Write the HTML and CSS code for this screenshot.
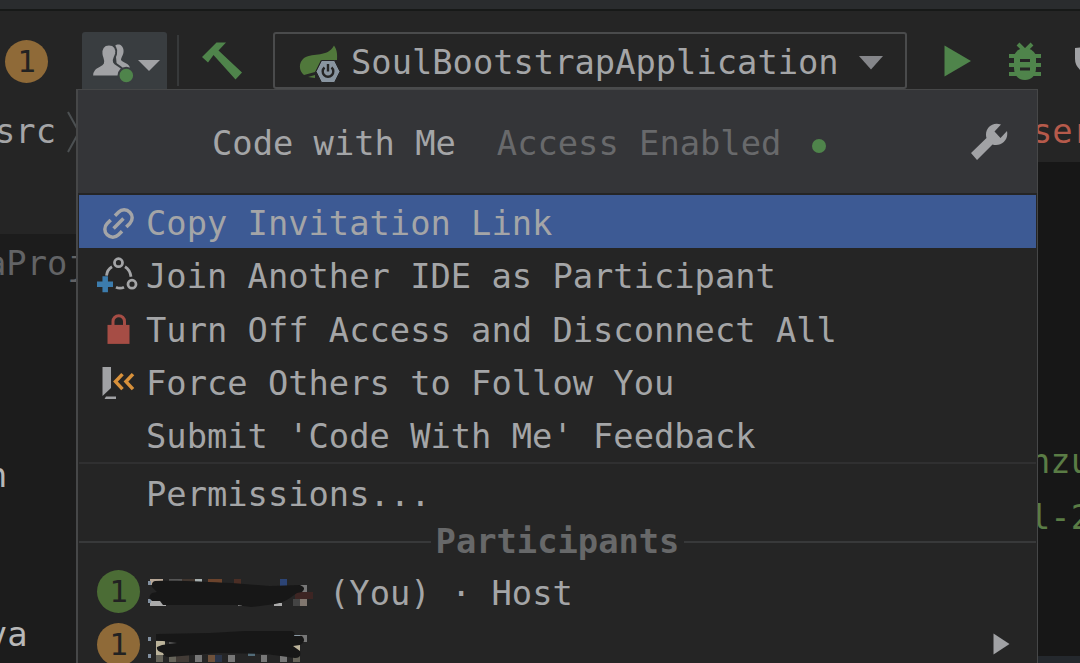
FILE: index.html
```
<!DOCTYPE html>
<html lang="en">
<head>
  <meta charset="UTF-8">
  <meta name="viewport" content="width=device-width, initial-scale=1.0">
  <title>Code with Me</title>
  <link rel="stylesheet" href="styles.css">
</head>
<body>
  <div class="titlebar"></div>

  <!-- Toolbar -->
  <div class="toolbar">
    <span class="avatar orange">1</span>
    <div class="cwm-button">
      <svg width="85" height="57" viewBox="82 32 85 57">
        <path class="gray" d="M115 46C118 43 123 45 123.500 50C124 55 121 57 121 60C123 63 129 63 130 68H117Z"/>
        <path class="gray edge" d="M109 44.500C115 44.500 117 49 116 54C115 58 113 59 114 62C116 66 124 65 125 76.500H92C92 66 101 67 103 63C104 60 102 58 101.500 54C101 49 103 44.500 109 44.500Z"/>
        <circle class="green edge" cx="126.300" cy="75.500" r="7.800"/>
        <path class="gray" d="M138 60H160L149 71Z"/>
      </svg>
    </div>
    <div class="divider"></div>
    <svg class="hammer" width="42" height="40" viewBox="202 41 42 40">
      <path class="green" d="M202 57L216.500 42.500H226L218.500 50.500L242 72.500L235.500 79.500L213.500 55L208 62.500Z"/>
    </svg>
    <div class="run-config">
      <svg width="42" height="40" viewBox="299 44 42 40">
        <path class="leaf" d="M334 45.500C338 51 337 57 337 60H321L315 72L304 75C299 71 298 63 304 58C314 52 327 58 334 45.500ZM308 77L315 75V78Z"/>
        <path class="badge" d="M321.500 60.500H334.500L340 71.500L334.500 82.500H321.500L316 71.500Z"/>
        <path class="power" d="M324.500 67.500A5.300 5.300 0 1 0 331.500 67.500M328 64V71.500"/>
      </svg>
      <span class="config-name">SoulBootstrapApplication</span>
      <svg class="config-arrow" width="24" height="14" viewBox="0 0 24 14"><path d="M0 0H24L12 13.500Z"/></svg>
    </div>
    <svg class="run" width="28" height="32" viewBox="0 0 28 32"><path class="green" d="M0.500 0.500L27 16L0.500 31.500Z"/></svg>
    <svg class="bug" width="34" height="38" viewBox="1008 42 34 38">
      <path class="bug-legs" d="M1018 44L1025 51L1032 44M1009 56H1041M1009 65H1041M1009 74H1041"/>
      <path class="green" d="M1014 55Q1018 48 1025 48T1036 55V68C1036 76 1031 80 1025 80S1014 76 1014 68Z"/>
      <path class="bug-slits" d="M1020 60.500H1030M1020 69H1030"/>
    </svg>
    <svg class="shield" width="8" height="26" viewBox="0 0 8 26"><path class="gray" d="M0 1L8 0V25Q0 20 0 12Z"/></svg>
  </div>

  <!-- Breadcrumbs -->
  <div class="navbar">
    <span class="crumb">src</span>
    <svg class="chevron" width="14" height="42" viewBox="0 0 14 42"><path d="M1 1L12 21L1 41"/></svg>
    <span class="crumb error">ser</span>
  </div>

  <div class="workspace">
    <div class="project">
      <div class="project-header"></div>
      <div class="project-root">aProj</div>
      <div class="project-file">n</div>
      <div class="project-file last">va</div>
    </div>
    <div class="editor">
      <div class="code">nzu</div>
      <div class="code">l-2</div>
      <div class="editor-footer"></div>
    </div>
  </div>

  <!-- Code with Me popup -->
  <div class="popup">
    <div class="popup-header">
      <span class="popup-title">Code with Me</span>
      <span class="popup-status">Access Enabled</span>
      <span class="status-dot"></span>
      <svg class="wrench" width="38" height="38" viewBox="970 123 38 38">
        <path class="gray" d="M971 153L986.500 138C984 130 991 121 1001 124.500L994.500 131.500L1000.500 138L1007 131C1009 141 1000 147 992.500 144.500L977 160Z"/>
      </svg>
    </div>
    <div class="item selected">
      <svg class="icon" width="68" height="53" viewBox="79 195 68 53">
        <g class="link" transform="translate(118.500 223.500) rotate(-45)">
          <path d="M-3 -8H-8A8 8 0 0 0 -8 8H-3M3 -8H8A8 8 0 0 1 8 8H3M-7 0H7"/>
        </g>
      </svg>
      <span>Copy Invitation Link</span>
    </div>
    <div class="item">
      <svg class="icon" width="68" height="53" viewBox="79 248.300 68 53">
        <g class="join">
          <circle cx="118.500" cy="263" r="4"/>
          <circle cx="132" cy="284.500" r="4"/>
          <path d="M112 267Q107 270 106.500 276M125 267Q130 270 131 277M116 287.500Q120 289.500 124 287.500"/>
        </g>
        <path class="plus" d="M105.200 276.500V292.500M97 284.500H113"/>
      </svg>
      <span>Join Another IDE as Participant</span>
    </div>
    <div class="item">
      <svg class="icon" width="68" height="53" viewBox="79 301.600 68 53">
        <path class="lock" d="M107.500 324.500H129.500V343.500H107.500Z"/>
        <path class="shackle" d="M113 325V321A5.700 5.700 0 0 1 124.500 321V325"/>
      </svg>
      <span>Turn Off Access and Disconnect All</span>
    </div>
    <div class="item">
      <svg class="icon" width="68" height="53" viewBox="79 354.900 68 53">
        <path class="gray" d="M102.500 367H111V388L102.500 396ZM106 396.300H116V399H104.500Z"/>
        <path class="follow" d="M122.500 374L115.500 381.500L122.500 389M133 374L126 381.500L133 389"/>
      </svg>
      <span>Force Others to Follow You</span>
    </div>
    <div class="item no-icon">Submit 'Code With Me' Feedback</div>
    <div class="separator"></div>
    <div class="item no-icon">Permissions...</div>
    <div class="section"><span>Participants</span></div>
    <div class="item participant">
      <span class="avatar green-bg">1</span>
      <svg class="redacted" width="166" height="40" viewBox="147 573 166 40">
        <g class="mosaic">
          <path fill="#b8a898" d="M150 580h13v6h-13z"/><path fill="#555" d="M169 580h13v6h-13z"/><path fill="#40352e" d="M182 580h13v6h-13z"/>
          <path fill="#a7b0b0" d="M195 580h7v6h-7z"/><path fill="#6b432c" d="M208 580h14v6h-14z"/><path fill="#4b2e25" d="M234 580h7v6h-7z"/>
          <path fill="#2c4475" d="M280 580h7v8h-7z"/><path fill="#777" d="M300 586h7v7h-7z"/><path fill="#3d2523" d="M295 593h18v7h-18z"/>
          <path fill="#444" d="M293 600h7v7h-7z"/><path fill="#81776f" d="M300 600h7v7h-7z"/><path fill="#aaa" d="M150 601h16v6h-16zM238 604h4v3h-4zM274 604h8v3h-8z"/>
          <path fill="#8290a0" d="M148 582h3v4h-3zM148 600h3v4h-3z"/>
        </g>
        <path class="ink" d="M155 582C182 581 204 583 232 584L270 587L300 586Q307 589 302 593L297 594C290 599 285 603 275 605L251 608L236 606H163L160 602L152 602Q147 598 152 594L157 593L152 588Q151 583 155 582Z"/>
      </svg>
      <span>(You) · Host</span>
    </div>
    <div class="item participant">
      <span class="avatar orange">1</span>
      <svg class="redacted" width="166" height="40" viewBox="147 625 166 40">
        <g class="mosaic">
          <path fill="#8290a0" d="M148 636h3v4h-3zM148 653h3v4h-3z"/><path fill="#555" d="M169 640h9v3h-9z"/><path fill="#8998a3" d="M293 634h7v6h-7z"/>
          <path fill="#777" d="M300 634h7v7h-7zM195 654h7v7h-7zM228 654h7v7h-7zM261 654h6v7h-6zM280 654h7v7h-7z"/><path fill="#bcb49b" d="M156 640h9v14h-9zM293 642h7v8h-7z"/>
          <path fill="#66645a" d="M156 654h7v7h-7zM169 654h7v7h-7zM293 654h7v7h-7z"/><path fill="#423b36" d="M176 654h13v7h-13z"/><path fill="#6e513b" d="M208 654h7v7h-7z"/>
          <path fill="#2b3549" d="M215 654h7v7h-7z"/><path fill="#526b78" d="M248 650h7v5h-7z"/>
        </g>
        <path class="ink" d="M156 633L210 632L245 630H292Q296 631 294 635H302Q307 640 300 644L293 645L300 650Q302 657 295 657L266 653L218 652L169 656Q164 656 163 652Q156 650 157 646L162 644L177 642L156 639Z"/>
      </svg>
      <svg class="submenu" width="17" height="22" viewBox="0 0 17 22"><path class="gray" d="M0.500 0.500L16.500 11L0.500 21.500Z"/></svg>
    </div>
  </div>
</body>
</html>
```
FILE: styles.css
```
* {
  box-sizing: border-box;
}
body {
  margin: 0;
  width: 1080px;
  height: 663px;
  overflow: hidden;
  position: relative;
  display: flex;
  flex-direction: column;
  background: #252525;
  color: #a4a5a7;
  font-family: 'DejaVu Sans Mono', monospace;
  font-size: 33.75px;
  line-height: 40px;
  white-space: nowrap;
}
svg {
  display: block;
  flex: none;
}
.gray {
  fill: #a1a2a5;
}
.green {
  fill: #4f844b;
}
.titlebar {
  flex: none;
  height: 11px;
  background: #2a2c2e;
  border-bottom: 2px solid #171918;
}

/* Toolbar */
.toolbar {
  flex: none;
  height: 78px;
  display: flex;
  align-items: flex-start;
  padding: 21px 0 0 5px;
}
.toolbar > * {
  flex: none;
}
.avatar {
  flex: none;
  width: 43px;
  height: 43px;
  border-radius: 50%;
  color: #222;
  font-size: 31px;
  line-height: 43px;
  text-align: center;
}
.orange {
  background: #8f6a38;
}
.green-bg {
  background: #4b6c35;
}
.toolbar .avatar {
  margin-top: 8px;
}
.cwm-button {
  margin-left: 34px;
  width: 85px;
  height: 57px;
  border-radius: 3px 3px 0 0;
  background: #393d40;
}
.edge {
  stroke: #393d40;
  stroke-width: 2;
}
.divider {
  width: 2px;
  height: 51px;
  margin: 3px 0 0 10px;
  background: #37393a;
}
.hammer {
  margin: 9px 0 0 23px;
}
.run-config {
  display: flex;
  align-items: flex-start;
  width: 634px;
  height: 57px;
  margin-left: 29px;
  padding: 10px 0 0 24px;
  border: 2px solid #4a4b4c;
  border-radius: 3px;
}
.leaf {
  fill: #50783b;
}
.badge {
  fill: #8995a0;
  stroke: #252525;
  stroke-width: 1;
}
.power {
  fill: none;
  stroke: #252525;
  stroke-width: 2.4;
}
.config-name {
  margin: -1px 0 0 10px;
}
.config-arrow {
  margin: 12px 0 0 20px;
  fill: #85868a;
}
.run {
  margin: 13px 0 0 37px;
}
.bug {
  margin: 10px 0 0 36px;
}
.bug-legs {
  fill: none;
  stroke: #4f844b;
  stroke-width: 4;
}
.bug-slits {
  stroke: #252525;
  stroke-width: 3;
}
.shield {
  margin: 15px 0 0 33px;
}

/* Breadcrumbs */
.navbar {
  flex: none;
  height: 73px;
  display: flex;
  padding-top: 22px;
}
.crumb {
  flex: none;
  width: 61px;
  margin: 1px 0 0 -5px;
}
.chevron {
  margin-left: 11px;
}
.chevron path {
  fill: none;
  stroke: #4c5052;
  stroke-width: 2;
}
.error {
  margin-left: 951px;
  color: #b65a4b;
}

.workspace {
  flex: 1;
  min-height: 0;
  display: flex;
  justify-content: space-between;
}
.project {
  width: 100px;
  background: #1c1c1c;
}
.project-header {
  height: 72px;
  background: #252525;
}
.project-root {
  margin: 10px 0 0 -14px;
  color: #626365;
}
.project-file {
  margin: 172px 0 0 -13px;
  color: #b8b8b8;
}
.project-file.last {
  margin-top: 119px;
}
.editor {
  width: 50px;
  padding-top: 280px;
  background: #171717;
  color: #5a7c45;
}
.code {
  height: 56px;
}
.editor-footer {
  height: 8px;
  margin-top: 102px;
  background: #24282d;
}

/* Popup menu */
.popup {
  position: absolute;
  left: 76px;
  top: 89px;
  width: 962px;
  height: 590px;
  padding: 0 1px;
  border: solid #464748;
  border-width: 1px 1px 0 2px;
  background: #252525;
}
.popup-header {
  display: flex;
  align-items: flex-start;
  height: 103px;
  margin: 0 -1px 2px;
  padding: 34px 0 0 134px;
  background: #343538;
}
.popup-status {
  margin-left: 41px;
  color: #68696b;
}
.status-dot {
  width: 14px;
  height: 14px;
  margin: 15px 0 0 31px;
  border-radius: 50%;
  background: #4f844b;
}
.wrench {
  margin: -1px 0 0 144px;
}
.item {
  display: flex;
  align-items: center;
  height: 53.3px;
}
.item > span:not(.avatar) {
  padding-top: 5px;
}
.selected {
  background: #3d5a94;
}
.item.no-icon {
  padding: 5px 0 0 67px;
}
.icon {
  margin-right: -1px;
}
.link,
.join {
  fill: none;
  stroke: #a4a5a7;
  stroke-width: 3.5;
}
.join {
  stroke-width: 2.8;
}
.plus {
  stroke: #3c7cad;
  stroke-width: 5.5;
}
.lock {
  fill: #a64d45;
}
.shackle {
  fill: none;
  stroke: #a64d45;
  stroke-width: 3;
}
.follow {
  fill: none;
  stroke: #d8913b;
  stroke-width: 3.5;
}
.separator {
  height: 2px;
  margin: 1px 0;
  background: #303031;
}
.section {
  display: flex;
  align-items: center;
  gap: 5px;
  height: 46px;
  padding-top: 1px;
  color: #676869;
  font-weight: bold;
}
.section::before,
.section::after {
  content: '';
  flex: 1;
  height: 2px;
  background: #38393a;
}
.participant {
  padding-left: 18px;
}
.redacted {
  margin: 2px 0 0 7px;
}
.redacted + span {
  margin-left: 16px;
}
.submenu {
  margin: -2px 0 0 680px;
}
.ink {
  fill: #171717;
}
```
